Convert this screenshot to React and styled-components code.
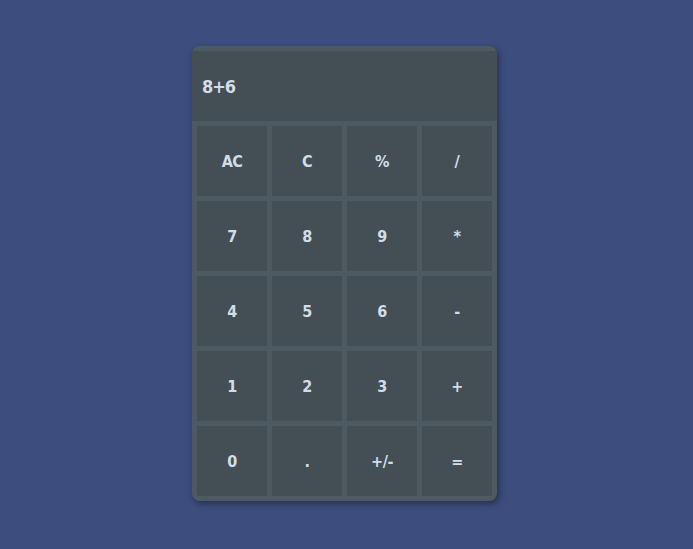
import React, { useState } from "react";
import styled, { createGlobalStyle } from "styled-components";

const GlobalStyle = createGlobalStyle`
    * {
        box-sizing: border-box;
    }

    body {
        margin: 0;
        background-color: #3d4d7d;
        font-family: Impact, "DejaVu Sans Condensed", "Liberation Sans Narrow", sans-serif;
        font-stretch: condensed;
    }
`;

const keys = [
    "AC", "C", "%", "/",
    "7", "8", "9", "*",
    "4", "5", "6", "-",
    "1", "2", "3", "+",
    "0", ".", "+/-", "=",
];

function App() {
    const [display] = useState("8+6");

    return (
        <Page>
            <GlobalStyle />
            <Calculator>
                <Display>{display}</Display>
                <Keypad>
                    {keys.map((key) => (
                        <Key key={key}>{key}</Key>
                    ))}
                </Keypad>
            </Calculator>
        </Page>
    );
}

const Page = styled.div`
    width: 693px;
    height: 549px;
    display: flex;
    justify-content: center;
    padding-top: 46px;
    padding-right: 4px;
`;

const Calculator = styled.div`
    width: 305px;
    height: 455px;
    background-color: #4e5a62;
    border-radius: 8px;
    padding-top: 5px;
    box-shadow: 2px 3px 6px rgba(20, 25, 45, 0.55);
    overflow: hidden;
`;

const Display = styled.div`
    height: 70px;
    background-color: #434f55;
    display: flex;
    align-items: center;
    padding-left: 10px;
    font-weight: 700;
    font-size: 18px;
    letter-spacing: -1px;
    color: #d3dde6;
`;

const Keypad = styled.div`
    display: grid;
    grid-template-columns: repeat(4, 70px);
    grid-auto-rows: 70px;
    gap: 5px;
    padding: 5px;
`;

const Key = styled.button`
    border: none;
    background-color: #434f55;
    color: #d3dde6;
    font-family: inherit;
    font-stretch: inherit;
    font-weight: 700;
    font-size: 16px;
    letter-spacing: -0.5px;
    padding: 0;
    cursor: pointer;

    :hover {
        background-color: #4a565d;
    }
`;

export default App;
